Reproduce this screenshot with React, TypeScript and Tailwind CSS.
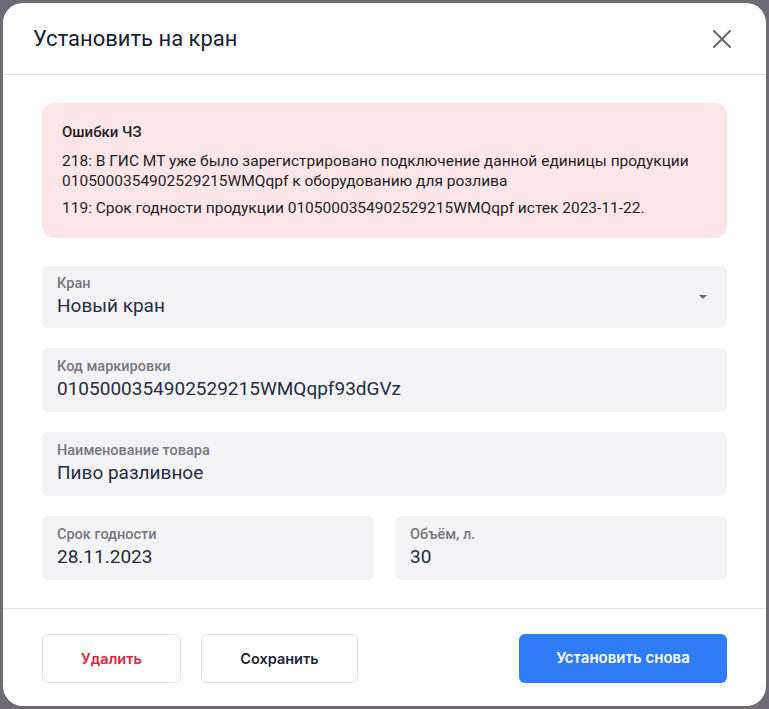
import React from 'react';

const Field = ({ label, value, caret, h = 'h-[64px]' }: { label: string; value: string; caret?: boolean; h?: string }) => (
  <div className={`relative flex ${h} flex-col justify-center rounded-[6px] bg-[#f4f4f6] px-[15px]`}>
    <span className="text-[14.5px] font-medium leading-[16px] text-[#76787e]">{label}</span>
    <span className="mt-[2px] text-[19px] leading-[24px] text-[#272c40]">{value}</span>
    {caret && (
      <span className="absolute right-[20px] top-[29px] h-0 w-0 border-x-[4px] border-t-[4px] border-x-transparent border-t-[#6b6b70]" />
    )}
  </div>
);

const App = () => {
  return (
    <div className="h-screen w-full bg-[#6f6b74] p-[3px] font-['Roboto',sans-serif]">
      <div className="flex h-[703px] flex-col rounded-[20px] bg-white">
        <div className="flex h-[72px] items-center justify-between border-b border-[#e4e5e8] pl-[30px] pr-[33px]">
          <h1 className="text-[22px] leading-[28px] text-[#1c2230]">Установить на кран</h1>
          <svg width="22" height="22" viewBox="0 0 22 22" fill="none" stroke="#6c6a72" strokeWidth="2.2" strokeLinecap="round">
            <path d="M3 3L19 19M19 3L3 19" />
          </svg>
        </div>

        <div className="flex flex-col gap-[20px] border-b border-[#e4e5e8] px-[39px] pb-[28px] pt-[28px]">
          <div className="mb-[8px] rounded-[12px] bg-[#fde5e9] px-[20px] pb-[20px] pt-[20px] text-[15.5px] leading-[20px] text-[#1d1f24]">
            <div className="text-[15px] font-medium leading-[18px]">Ошибки ЧЗ</div>
            <p className="mt-[10px]">
              218: В ГИС МТ уже было зарегистрировано подключение данной единицы продукции
              0105000354902529215WMQqpf к оборудованию для розлива
            </p>
            <p className="mt-[7px]">119: Срок годности продукции 0105000354902529215WMQqpf истек 2023-11-22.</p>
          </div>
          <Field label="Кран" value="Новый кран" caret h="h-[62px]" />
          <Field label="Код маркировки" value="0105000354902529215WMQqpf93dGVz" />
          <Field label="Наименование товара" value="Пиво разливное" />
          <div className="grid grid-cols-2 gap-[21px]">
            <Field label="Срок годности" value="28.11.2023" />
            <Field label="Объём, л." value="30" />
          </div>
        </div>

        <div className="flex items-start gap-[20px] px-[39px] pt-[25px] font-['Inter',sans-serif]">
          <button className="h-[49px] w-[139px] rounded-[6px] border border-[#e2e3e6] text-[14.5px] font-semibold text-[#e0243a]">
            Удалить
          </button>
          <button className="h-[49px] w-[157px] rounded-[6px] border border-[#e2e3e6] text-[14.5px] font-semibold text-[#1f2535]">
            Сохранить
          </button>
          <button className="ml-auto h-[49px] w-[208px] rounded-[6px] bg-[#2f7cf7] text-[15px] font-semibold text-white">
            Установить снова
          </button>
        </div>
      </div>
    </div>
  );
};

export default App;
